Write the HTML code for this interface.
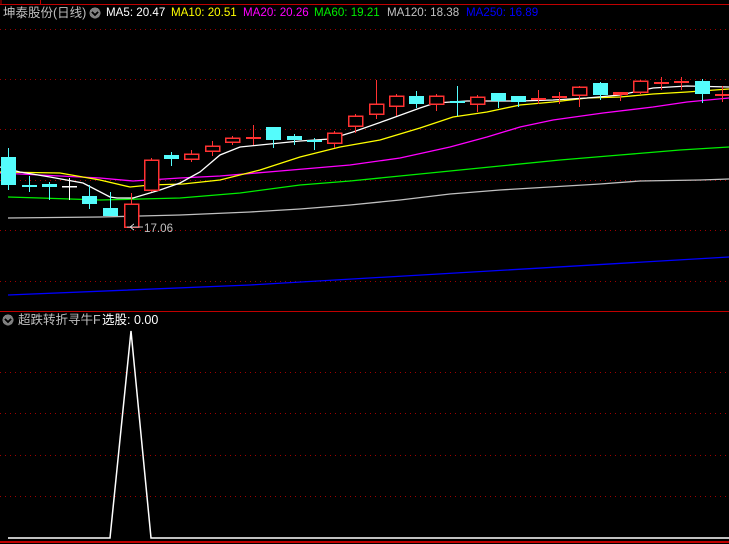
<!DOCTYPE html>
<html><head><meta charset="utf-8"><style>
html,body{margin:0;padding:0;background:#000;width:729px;height:544px;overflow:hidden}
.t{position:absolute;font-family:"Liberation Sans","Noto Sans CJK SC",sans-serif;font-size:11.6px;white-space:nowrap;top:5px;line-height:16px}
.z{font-size:12.5px}
</style></head><body>
<svg width="729" height="544" style="position:absolute;left:0;top:0" shape-rendering="crispEdges">
<g stroke="#c00000" stroke-width="1.3" fill="none">
<line x1="0" y1="4.5" x2="729" y2="4.5"/>
<line x1="1" y1="0" x2="1" y2="4"/><line x1="40.5" y1="0" x2="40.5" y2="4"/>
<line x1="0" y1="311.5" x2="729" y2="311.5"/>
<line x1="0" y1="542" x2="729" y2="542" stroke-width="2"/>
</g>
<g stroke="#a00000" stroke-width="1" stroke-dasharray="1 4" fill="none">
<line x1="0" y1="29.5" x2="729" y2="29.5"/><line x1="0" y1="79.5" x2="729" y2="79.5"/>
<line x1="0" y1="129.5" x2="729" y2="129.5"/><line x1="0" y1="180.5" x2="729" y2="180.5"/>
<line x1="0" y1="230.5" x2="729" y2="230.5"/><line x1="0" y1="281.5" x2="729" y2="281.5"/>
<line x1="0" y1="372.5" x2="729" y2="372.5"/><line x1="0" y1="413.5" x2="729" y2="413.5"/>
<line x1="0" y1="455.5" x2="729" y2="455.5"/><line x1="0" y1="496.5" x2="729" y2="496.5"/>
</g>
<g fill="none" stroke-width="1.3" shape-rendering="auto">
<polyline stroke="#0000ff" points="8,295 250,285 729,257"/>
<polyline stroke="#c0c0c0" points="8,218 100,217 140,216 180,215 250,212 300,209 350,205 400,200 450,194 500,190 600,184 640,181 700,180 729,179"/>
<polyline stroke="#00ee00" points="8,197 40,198 100,200 140,199 180,198 240,193 300,185 350,181 400,176 500,166 560,160 620,155 680,150 729,147"/>
<polyline stroke="#ff00ff" points="0,173 100,178 133,181 180,178 220,176 280,171 350,165 400,158 450,147 487,137 520,127 553,120 603,113 653,107 687,102 729,98"/>
<polyline stroke="#ffff00" points="0,172 60,173 100,180 130,187 150,185 183,184 220,180 260,170 300,157 340,147 380,140 420,128 453,117 487,112 520,105 553,102 587,98 620,97 653,94 687,92 729,89"/>
<polyline stroke="#ffffff" points="0,167 20,172 50,177 83,183 110,197 117,198 133,198 160,190 180,183 200,172 220,155 240,147 260,145 300,141 330,139 353,132 387,120 420,108 435,103 467,101 520,101 553,100 587,98 620,95 653,88 687,86 729,87"/>
</g>
<g id="c"></g>
<polyline fill="none" stroke="#fff" stroke-width="1.5" shape-rendering="auto" points="8,538 110,538 131,331 151,538 729,538"/>
<g stroke="#c0c0c0" fill="none" stroke-width="1"><line x1="127" y1="227" x2="143" y2="227"/><polyline points="134,224 130,227 134,230"/></g>
<circle cx="95" cy="13" r="5.5" fill="#808080"/><polyline points="92,12 95,15 98,12" stroke="#000" stroke-width="1.5" fill="none"/>
<circle cx="8" cy="320" r="5.5" fill="#808080"/><polyline points="5,319 8,322 11,319" stroke="#000" stroke-width="1.5" fill="none"/>
</svg>
<div class="t z" style="left:3px;color:#c0c0c0">坤泰股份(日线)</div>
<div class="t" style="left:106px;color:#fff">MA5: 20.47</div>
<div class="t" style="left:171px;color:#ffff00">MA10: 20.51</div>
<div class="t" style="left:243px;color:#ff00ff">MA20: 20.26</div>
<div class="t" style="left:314px;color:#00ee00">MA60: 19.21</div>
<div class="t" style="left:387px;color:#c0c0c0">MA120: 18.38</div>
<div class="t" style="left:466px;color:#0000ff">MA250: 16.89</div>
<div class="t" style="left:144px;top:221px;color:#c0c0c0">17.06</div>
<div class="t z" style="left:18px;top:312px;color:#c0c0c0">超跌转折寻牛F</div>
<div class="t z" style="left:102px;top:312px;color:#fff">选股: 0.00</div>
<script>
var d=[
[8,'c',157,185,148,190],[29,'c',185,187,176,192],[49,'c',184,187,182,200],[69,'w',186,187,178,200],
[89,'c',196,204,185,209],[110,'c',208,216,192,216],[131,'r',204,227,193,227],[151,'r',160,190,158,192],
[171,'c',155,159,152,166],[191,'r',154,159,150,162],[212,'r',146,151,141,156],[232,'r',138,142,136,145],
[253,'R',137,139,125,145],[273,'c',127,140,127,148],[294,'c',136,140,134,145],[314,'c',140,142,138,150],
[334,'r',133,143,131,148],[355,'r',116,126,114,133],[376,'r',104,114,80,119],[396,'r',96,106,94,116],
[416,'c',96,104,91,108],[436,'r',96,104,94,111],[457,'c',101,103,86,116],[477,'r',97,104,95,112],
[498,'c',93,101,93,108],[518,'c',96,102,96,107],[538,'R',98,100,90,104],[559,'R',96,98,92,104],
[579,'r',87,95,86,107],[600,'c',83,95,82,100],[620,'R',92,95,92,101],[640,'r',81,92,80,94],
[661,'R',82,84,77,90],[681,'R',81,83,77,90],[702,'c',81,94,79,103],[722,'R',94,96,86,102]];
var s='';d.forEach(function(a){var x=a[0],t=a[1],b1=a[2],b2=a[3],h=a[4],l=a[5],c=(t=='c')?'#54fcfc':(t=='w'?'#fff':'#ff3232');
s+='<line x1="'+(x+.5)+'" y1="'+h+'" x2="'+(x+.5)+'" y2="'+l+'" stroke="'+c+'" stroke-width="1.3"/>';
if(t=='c'||t=='w'||t=='R'){s+='<rect x="'+(x-7)+'" y="'+b1+'" width="15" height="'+Math.max(b2-b1,1.5)+'" fill="'+c+'"/>';}
else{s+='<rect x="'+(x-6.5)+'" y="'+b1+'" width="14" height="'+(b2-b1)+'" fill="#000" stroke="'+c+'" stroke-width="1.5"/>';}});
document.getElementById('c').innerHTML=s;
</script>
</body></html>
